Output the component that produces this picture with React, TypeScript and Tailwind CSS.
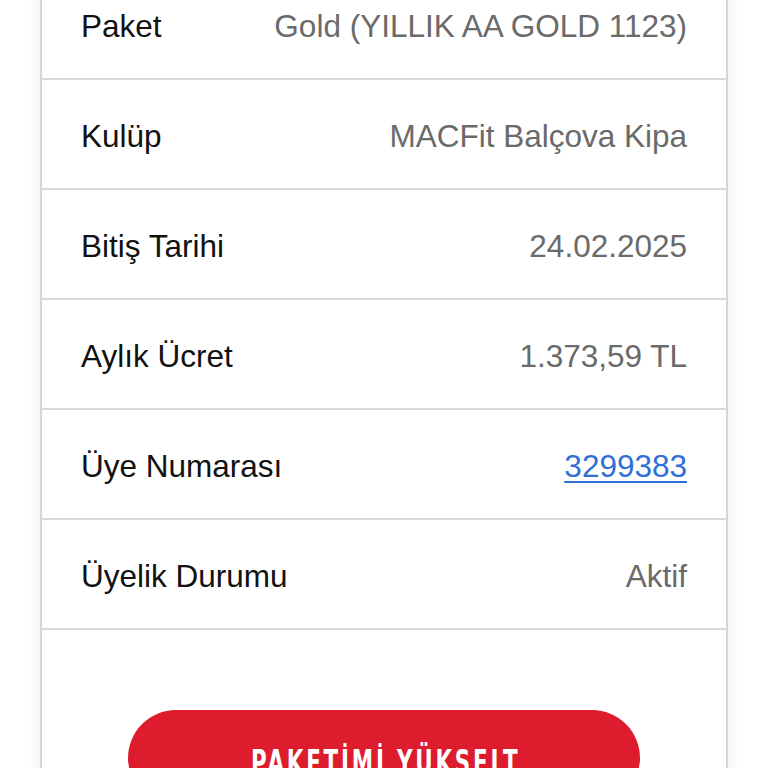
const rows = [
  { label: "Paket", value: "Gold (YILLIK AA GOLD 1123)" },
  { label: "Kulüp", value: "MACFit Balçova Kipa" },
  { label: "Bitiş Tarihi", value: "24.02.2025" },
  { label: "Aylık Ücret", value: "1.373,59 TL" },
  { label: "Üye Numarası", value: "3299383", link: true },
  { label: "Üyelik Durumu", value: "Aktif" },
];

export default function App() {
  return (
    <div className="min-h-screen overflow-hidden bg-white font-['Liberation_Sans',Arial,sans-serif]">
      <div className="mx-[40px] -mt-[30px] border-x-2 border-[#d6d6d6] bg-white shadow-[0_0_14px_rgba(0,0,0,0.08)]">
        {rows.map((row) => (
          <div
            key={row.label}
            className="flex h-[110px] items-center justify-between border-b-2 border-[#d9d9d9] px-[39px] pt-[5px] text-[31.5px]"
          >
            <span className="text-[#111]">{row.label}</span>
            {row.link ? (
              <a href="#" className="text-[#2f6fd6] underline decoration-2 underline-offset-[4px]">
                {row.value}
              </a>
            ) : (
              <span className="text-[#6a6a6a]">{row.value}</span>
            )}
          </div>
        ))}
        <div className="flex justify-center pt-[80px] pb-[60px]">
          <button className="flex h-[96px] w-[512px] items-center justify-center rounded-full bg-[#dd1c2e] pt-[8px] text-white">
            <span className="inline-block scale-x-[0.7] pl-[4px] font-['DejaVu_Sans_Condensed',sans-serif] text-[34px] font-bold tracking-[4px]">
              PAKETİMİ YÜKSELT
            </span>
          </button>
        </div>
      </div>
    </div>
  );
}
